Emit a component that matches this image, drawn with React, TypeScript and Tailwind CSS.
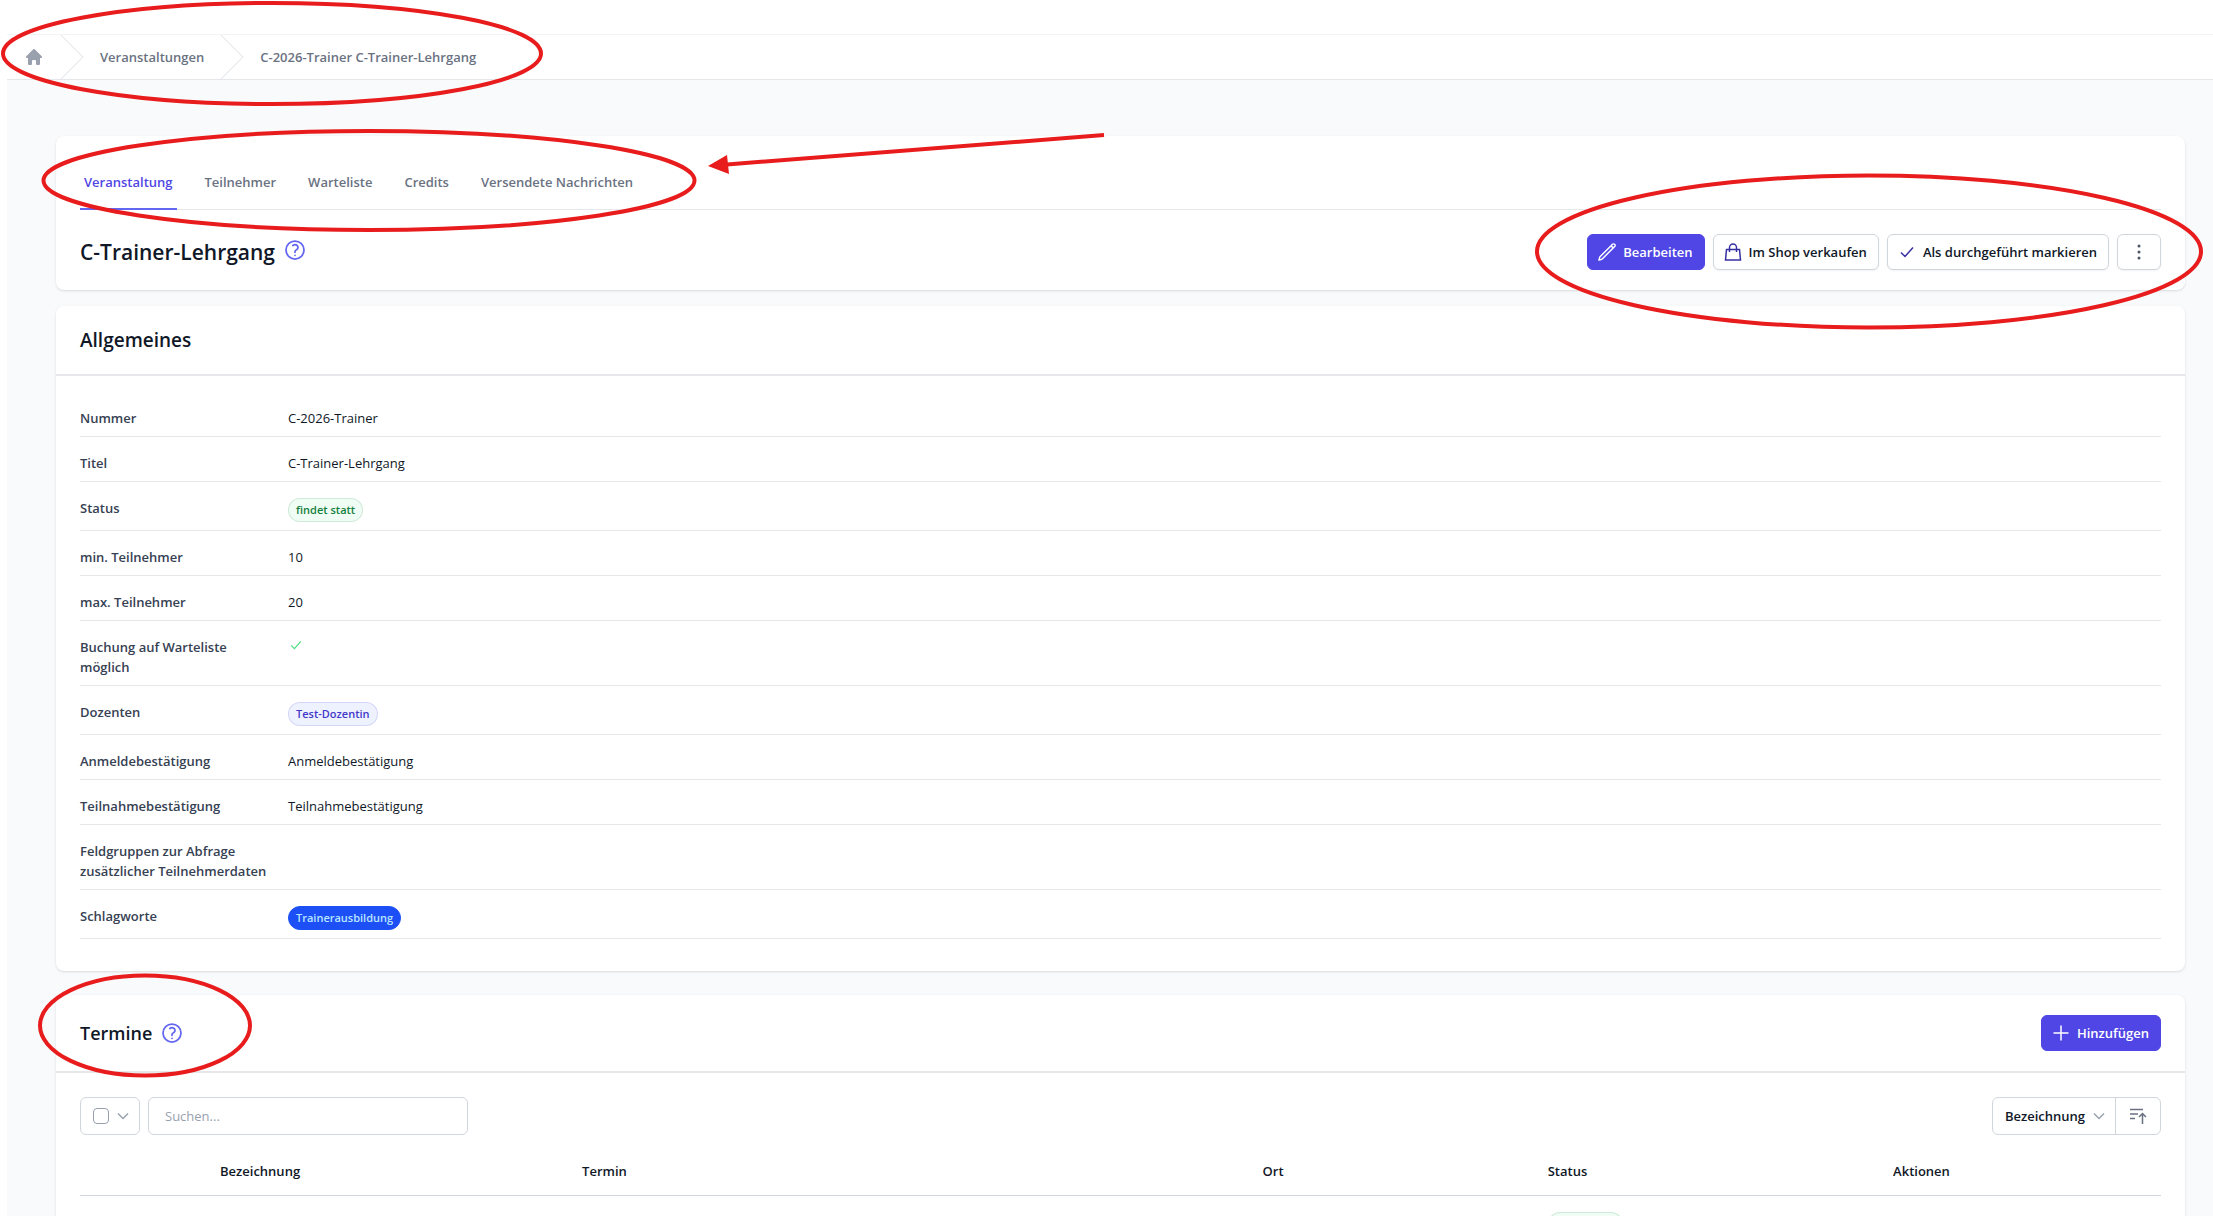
import type { ReactNode } from "react";

const tabs = [
  "Veranstaltung",
  "Teilnehmer",
  "Warteliste",
  "Credits",
  "Versendete Nachrichten",
];

const BreadcrumbArrow = () => (
  <svg
    className="h-11 w-6 shrink-0 text-gray-200"
    viewBox="0 0 24 44"
    preserveAspectRatio="none"
    fill="currentColor"
    aria-hidden="true"
  >
    <path d="M.293 0l22 22-22 22h1.414l22-22-22-22H.293z" />
  </svg>
);

const CheckIcon = ({ className }: { className: string }) => (
  <svg
    className={className}
    viewBox="0 0 20 20"
    fill="none"
    stroke="currentColor"
    strokeWidth={1.5}
    aria-hidden="true"
  >
    <path d="M4 10.5l4 4 8-9" />
  </svg>
);

const ChevronIcon = () => (
  <svg
    className="size-4 text-gray-400"
    viewBox="0 0 16 16"
    fill="none"
    stroke="currentColor"
    strokeWidth={1.5}
    aria-hidden="true"
  >
    <path d="M3 5.5l5 5 5-5" />
  </svg>
);

const HelpButton = () => (
  <button type="button" aria-label="Hilfe" className="text-[#6366f1]">
    <svg
      className="size-6"
      viewBox="0 0 24 24"
      fill="none"
      stroke="currentColor"
      strokeWidth={1.75}
      strokeLinecap="round"
      strokeLinejoin="round"
    >
      <path d="M9.879 7.519c1.171-1.025 3.071-1.025 4.242 0 1.172 1.025 1.172 2.687 0 3.712-.203.179-.43.326-.67.442-.745.361-1.45.999-1.45 1.827v.75M21 12a9 9 0 1 1-18 0 9 9 0 0 1 18 0Zm-9 5.25h.008v.008H12v-.008Z" />
    </svg>
  </button>
);

const Badge = ({
  tone,
  children,
}: {
  tone: "green" | "indigo" | "blue";
  children: ReactNode;
}) => {
  const tones = {
    green: "border-[#15803d]/15 bg-green-50 text-[#15803d]",
    indigo: "border-[#4338ca]/15 bg-indigo-50 text-[#4338ca]",
    blue: "border-[#1d4ff7] bg-[#1d4ff7] text-sky-200",
  };
  return (
    <span
      className={`inline-flex h-6 items-center rounded-full border px-[7px] text-[11px] font-semibold ${tones[tone]}`}
    >
      {children}
    </span>
  );
};

const details: { label: string; value: ReactNode }[] = [
  { label: "Nummer", value: "C-2026-Trainer" },
  { label: "Titel", value: "C-Trainer-Lehrgang" },
  { label: "Status", value: <Badge tone="green">findet statt</Badge> },
  { label: "min. Teilnehmer", value: "10" },
  { label: "max. Teilnehmer", value: "20" },
  {
    label: "Buchung auf Warteliste möglich",
    value: <CheckIcon className="size-4 text-[#4ade80]" />,
  },
  { label: "Dozenten", value: <Badge tone="indigo">Test-Dozentin</Badge> },
  { label: "Anmeldebestätigung", value: "Anmeldebestätigung" },
  { label: "Teilnahmebestätigung", value: "Teilnahmebestätigung" },
  { label: "Feldgruppen zur Abfrage zusätzlicher Teilnehmerdaten", value: "" },
  { label: "Schlagworte", value: <Badge tone="blue">Trainerausbildung</Badge> },
];

const buttonBase =
  "inline-flex h-9 items-center gap-1.5 rounded-md border pl-[9px] pr-[11px] text-[13px] font-semibold cursor-pointer";
const primaryButton = `${buttonBase} border-[#4f46e5] bg-[#4f46e5] text-white`;
const secondaryButton = `${buttonBase} border-gray-300 bg-white text-gray-900 shadow-xs`;

// Red marker strokes drawn on top of the page
const Markers = () => (
  <svg
    className="pointer-events-none absolute top-0 left-0 h-[1216px] w-[2213px]"
    viewBox="0 0 2213 1216"
    fill="none"
    stroke="#e81c1c"
    strokeWidth={4}
    aria-hidden="true"
  >
    <ellipse cx="272" cy="53.5" rx="269" ry="50.5" />
    <ellipse cx="369" cy="180.5" rx="325.5" ry="49.5" />
    <ellipse cx="1869" cy="251.5" rx="332" ry="76" />
    <ellipse cx="145" cy="1025.5" rx="105" ry="50" />
    <path d="M1104 135L727 164.5" />
    <path d="M708 166L727 155L729 174Z" fill="#e81c1c" stroke="none" />
  </svg>
);

const App = () => {
  return (
    <div className="relative h-screen overflow-hidden bg-white pt-[34px] pl-[7px] font-['Open_Sans','Noto_Sans',sans-serif] text-[13px] leading-5 text-gray-900">
      <nav
        aria-label="Breadcrumb"
        className="border-y border-t-gray-100 border-b-gray-200 bg-white pl-[17px]"
      >
        <ol className="flex items-center gap-4 font-semibold text-gray-500">
          <li>
            <a href="#" aria-label="Startseite" className="text-gray-400">
              <svg className="size-5" viewBox="0 0 20 20" fill="currentColor">
                <path d="M9.293 2.293a1 1 0 0 1 1.414 0l7 7A1 1 0 0 1 17 11h-1v6a1 1 0 0 1-1 1h-2a1 1 0 0 1-1-1v-3a1 1 0 0 0-1-1H9a1 1 0 0 0-1 1v3a1 1 0 0 1-1 1H5a1 1 0 0 1-1-1v-6H3a1 1 0 0 1-.707-1.707l7-7Z" />
              </svg>
            </a>
          </li>
          <li className="flex items-center gap-4">
            <BreadcrumbArrow />
            <a href="#">Veranstaltungen</a>
          </li>
          <li className="flex items-center gap-4">
            <BreadcrumbArrow />
            <a href="#" aria-current="page">
              C-2026-Trainer C-Trainer-Lehrgang
            </a>
          </li>
        </ol>
      </nav>

      <main className="bg-gray-50 pt-14 pr-7 pb-16 pl-[49px]">
        <section className="rounded-lg bg-white px-6 py-5 shadow-sm">
          <nav aria-label="Tabs" className="flex gap-6 border-b border-gray-200">
            {tabs.map((tab, index) => (
              <a
                key={tab}
                href="#"
                className={`-mb-px border-b-2 px-1 py-4 font-semibold ${
                  index === 0
                    ? "border-[#6366f1] text-[#4f46e5]"
                    : "border-transparent text-gray-500"
                }`}
              >
                {tab}
              </a>
            ))}
          </nav>
          <div className="flex items-center justify-between pt-6">
            <div className="flex items-start gap-2">
              <h1 className="text-[21px] leading-7 font-semibold">
                C-Trainer-Lehrgang
              </h1>
              <HelpButton />
            </div>
            <div className="flex gap-2">
              <button type="button" className={primaryButton}>
                <svg
                  className="size-5"
                  viewBox="0 0 24 24"
                  fill="none"
                  stroke="currentColor"
                  strokeWidth={1.75}
                  strokeLinecap="round"
                  strokeLinejoin="round"
                >
                  <path d="m16.862 4.487 1.687-1.688a1.875 1.875 0 1 1 2.652 2.652L6.832 19.82a4.5 4.5 0 0 1-1.897 1.13l-2.685.8.8-2.685a4.5 4.5 0 0 1 1.13-1.897L16.863 4.487Zm0 0L19.5 7.125" />
                </svg>
                Bearbeiten
              </button>
              <button type="button" className={secondaryButton}>
                <svg
                  className="size-5 text-[#3730a3]"
                  viewBox="0 0 20 20"
                  fill="none"
                  stroke="currentColor"
                  strokeWidth={1.5}
                >
                  <path d="M3.5 7.5h13l1 10.500h-15zM6.500 10V5.500a3.500 3.500 0 0 1 7 0V10" />
                </svg>
                Im Shop verkaufen
              </button>
              <button type="button" className={secondaryButton}>
                <CheckIcon className="size-5 text-[#3730a3]" />
                Als durchgeführt markieren
              </button>
              <button
                type="button"
                aria-label="Weitere Aktionen"
                className="h-9 cursor-pointer rounded-md border border-gray-300 bg-white px-[11px] text-gray-600 shadow-xs"
              >
                <svg className="size-5" viewBox="0 0 20 20" fill="currentColor">
                  <circle cx="10" cy="4" r="1.5" />
                  <circle cx="10" cy="10" r="1.5" />
                  <circle cx="10" cy="16" r="1.5" />
                </svg>
              </button>
            </div>
          </div>
        </section>

        <section className="mt-4 rounded-lg bg-white pb-8 shadow-sm">
          <div className="border-b-2 border-gray-200 px-6 py-5">
            <h2 className="text-[19px] leading-7 font-semibold">Allgemeines</h2>
          </div>
          <dl className="px-6 pt-4">
            {details.map(({ label, value }) => (
              <div
                key={label}
                className="flex items-start border-b border-gray-200 pt-4 pb-2"
              >
                <dt className="w-52 shrink-0 pr-4 font-semibold text-gray-700">
                  {label}
                </dt>
                <dd className="flex">{value}</dd>
              </div>
            ))}
          </dl>
        </section>

        <section className="mt-6 rounded-lg bg-white shadow-sm">
          <div className="flex items-center justify-between border-b-2 border-gray-200 px-6 py-5">
            <div className="flex items-center gap-2">
              <h2 className="text-lg leading-7 font-semibold">Termine</h2>
              <HelpButton />
            </div>
            <button type="button" className={primaryButton}>
              <svg
                className="size-5"
                viewBox="0 0 20 20"
                stroke="currentColor"
                strokeWidth={1.5}
              >
                <path d="M10 2.5v15M2.5 10h15" />
              </svg>
              Hinzufügen
            </button>
          </div>

          <div className="px-6 pt-6 pb-10">
            <div className="flex justify-between">
              <div className="flex gap-2">
                <div className="flex h-[38px] items-center gap-1.5 rounded-md border border-gray-300 pr-2 pl-3">
                  <input
                    type="checkbox"
                    aria-label="Alle auswählen"
                    className="size-4 appearance-none rounded border border-gray-400 bg-white"
                  />
                  <button type="button" aria-label="Auswahl">
                    <ChevronIcon />
                  </button>
                </div>
                <input
                  type="search"
                  aria-label="Suchen"
                  placeholder="Suchen..."
                  className="h-[38px] w-80 rounded-md border border-gray-300 px-4 placeholder:text-gray-400"
                />
              </div>
              <div className="flex h-[38px] divide-x divide-gray-300 rounded-md border border-gray-300">
                <button
                  type="button"
                  className="flex items-center gap-1.5 pr-2 pl-3 font-semibold"
                >
                  Bezeichnung
                  <ChevronIcon />
                </button>
                <button
                  type="button"
                  aria-label="Aufsteigend sortieren"
                  className="px-3 text-gray-500"
                >
                  <svg
                    className="size-5"
                    viewBox="0 0 20 20"
                    fill="none"
                    stroke="currentColor"
                    strokeWidth={1.5}
                  >
                    <path d="M2 3.5h13M2 8h8M2 12.5h5M14.5 18V8M11 11l3.500-3.500L18 11" />
                  </svg>
                </button>
              </div>
            </div>

            <table className="mt-3 w-full table-fixed text-left">
              <thead>
                <tr className="border-b border-gray-300">
                  <td className="w-32" />
                  <th className="w-[17.4%] px-3 py-[14px] font-semibold">
                    Bezeichnung
                  </th>
                  <th className="w-[32.7%] px-3 font-semibold">Termin</th>
                  <th className="w-[13.7%] px-3 font-semibold">Ort</th>
                  <th className="w-[16.6%] px-3 font-semibold">Status</th>
                  <th className="px-3 font-semibold">Aktionen</th>
                </tr>
              </thead>
              <tbody>
                <tr>
                  <td />
                  <td />
                  <td />
                  <td />
                  <td className="px-3 py-4">
                    <Badge tone="green">findet statt</Badge>
                  </td>
                  <td />
                </tr>
              </tbody>
            </table>
          </div>
        </section>
      </main>
      <Markers />
    </div>
  );
};

export default App;
